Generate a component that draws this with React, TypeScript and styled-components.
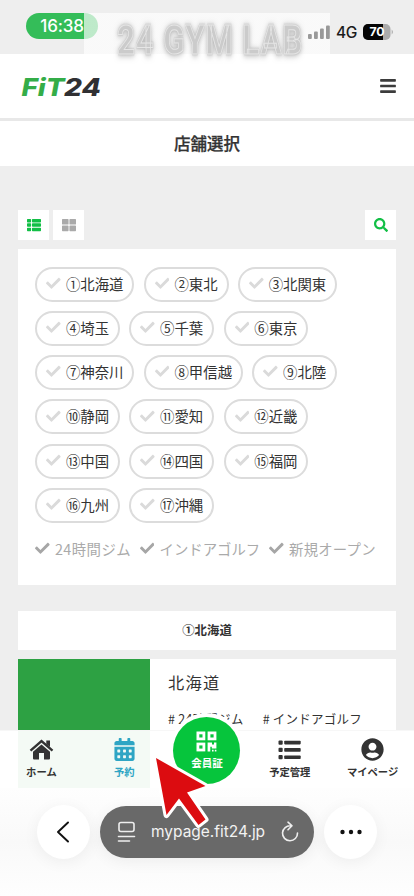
import React from "react";
import styled, { createGlobalStyle, css } from "styled-components";
import {
  FaBars,
  FaCalendarAlt,
  FaCheck,
  FaSearch,
  FaThLarge,
  FaThList,
  FaUserCircle,
} from "react-icons/fa";

const GlobalStyle = createGlobalStyle`
  * { box-sizing: border-box; }
  body {
    margin: 0;
    background: #eee;
    color: #333;
    font-family: "Noto Sans CJK JP", sans-serif;
  }
`;

const Screen = styled.div`
  position: relative;
  width: 414px;
  height: 896px;
  overflow: hidden;
  background: #eeeeee;
`;

const StatusBar = styled.div`
  height: 54px;
  display: flex;
  align-items: flex-start;
  justify-content: space-between;
  padding: 13px 20px 0 26px;
  font-family: Inter, sans-serif;
`;

const Clock = styled.div`
  width: 72px;
  height: 26px;
  border-radius: 13px;
  background: #34bd59;
  color: #fff;
  font-size: 17px;
  font-weight: 500;
  line-height: 26px;
  text-align: center;
  letter-spacing: -0.2px;
`;

const StatusRight = styled.div`
  position: relative;
  z-index: 1;
  display: flex;
  align-items: center;
  height: 38px;
  font-size: 15.5px;
  font-weight: 500;
  letter-spacing: -0.3px;
  color: #1c1c1c;
`;

const Network = styled.span`
  margin: 0 6px 0 6px;
  width: 21px;
`;

const Banner = styled.div`
  position: absolute;
  left: 84px;
  top: 13px;
  width: 246px;
  height: 50px;
  padding: 3px 0 0 33px;
  background: linear-gradient(rgba(255, 255, 255, 0.68) 0 84%, rgba(255, 255, 255, 0));
`;

const BannerTitle = styled.div`
  width: max-content;
  transform: scaleX(0.775);
  transform-origin: left;
  font: 700 40.5px/48px Roboto, sans-serif;
  letter-spacing: 1px;
  white-space: nowrap;
  color: #cbcbcb;
  -webkit-text-stroke: 1px #e6e6e6;
  filter: drop-shadow(0 0 1px #bbb) drop-shadow(0 1px 3px rgba(120, 120, 120, 0.5));
`;

const Header = styled.header`
  height: 67px;
  padding: 0 17px 0 21px;
  background: #fff;
  border-bottom: 3px solid #e8e8e8;
  display: flex;
  align-items: center;
  justify-content: space-between;
`;

const PageTitle = styled.h1`
  margin: 0;
  height: 45px;
  background: #fff;
  text-align: center;
  font-size: 16.5px;
  line-height: 44px;
  font-weight: 500;
  -webkit-text-stroke: 0.25px #333;
`;

const Content = styled.main`
  padding: 44px 18px 0;
`;

const Toolbar = styled.div`
  display: flex;
  gap: 4px;
  margin-bottom: 9px;
`;

const ToolButton = styled.button<{ $tone: string; $end?: boolean }>`
  width: 31px;
  height: 30px;
  padding: 0;
  border: 0;
  background: #fff;
  color: ${(p) => p.$tone};
  display: flex;
  align-items: center;
  justify-content: center;
  font-size: 14px;
  ${(p) => p.$end && css`margin-left: auto;`}
`;

const Panel = styled.section`
  height: 336px;
  padding: 18px 0 0 17.3px;
  background: #fff;
`;

const ChipRow = styled.div`
  display: flex;
  gap: 9.4px;
  height: 35px;
  margin-bottom: 9.15px;
`;

const Chip = styled.button`
  display: flex;
  align-items: center;
  gap: 5px;
  height: 35px;
  padding: 0 9px 2px 9px;
  border: 2px solid #dcdcdc;
  border-radius: 18px;
  background: #fff;
  color: #333;
  font: 400 14.4px/29px "Noto Sans CJK JP", sans-serif;
  white-space: nowrap;
  svg { font-size: 14.6px; color: #dadada; }
`;

const Legend = styled.div`
  display: flex;
  gap: 9px;
  margin-top: 14px;
`;

const LegendItem = styled.span`
  display: flex;
  align-items: center;
  gap: 5px;
  height: 24px;
  font-size: 14.4px;
  line-height: 24px;
  color: #aaa;
  white-space: nowrap;
  svg { font-size: 14.6px; color: #a6a6a6; }
`;

const LegendText = styled.span<{ $width: number; $spacing: number }>`
  width: ${(p) => p.$width}px;
  letter-spacing: ${(p) => p.$spacing}px;
`;

const SectionTitle = styled.h2`
  margin: 26px 0 9px;
  height: 39px;
  background: #fff;
  text-align: center;
  font-size: 12.4px;
  line-height: 39px;
  font-weight: 700;
`;

const StoreCard = styled.article`
  display: flex;
  height: 200px;
  background: #fff;
`;

const StoreImage = styled.div`
  width: 132px;
  background: #2da143;
`;

const StoreInfo = styled.div`
  padding: 11px 0 0 18px;
`;

const StoreName = styled.div`
  font-size: 16.2px;
  line-height: 25px;
  letter-spacing: 1.3px;
`;

const Tags = styled.div`
  display: flex;
  gap: 19px;
  margin-top: 14px;
  font-size: 12.5px;
  line-height: 20px;
  letter-spacing: 0.25px;
  white-space: nowrap;
`;

const Dock = styled.div`
  position: absolute;
  inset: 730px 0 0;
`;

const NavBar = styled.nav`
  height: 58px;
  display: grid;
  grid-template-columns: repeat(5, 82.8px);
  background: rgba(255, 255, 255, 0.95);
  border-top: 1px solid rgba(245, 245, 245, 0.8);
`;

const NavItem = styled.a<{ $active?: boolean }>`
  display: flex;
  flex-direction: column;
  align-items: center;
  padding-top: 7px;
  color: ${(p) => (p.$active ? "#2fa5c4" : "#333")};
  font-size: 10.3px;
  font-weight: 700;
  line-height: 18px;
  white-space: nowrap;
  svg { font-size: 23px; margin-bottom: 2px; }
`;

const MemberCard = styled.a`
  justify-self: center;
  width: 67px;
  height: 67px;
  margin-top: -14.5px;
  border-radius: 50%;
  background: #06c53c;
  box-shadow: 0 0 0 4px #fff;
  color: #fff;
  display: flex;
  flex-direction: column;
  align-items: center;
  padding-top: 14px;
  font-size: 10.5px;
  font-weight: 700;
  line-height: 16px;
  svg { margin-bottom: 3px; }
`;

const BrowserBar = styled.div`
  height: 108px;
  padding: 17px 37px 0;
  display: flex;
  align-items: flex-start;
  justify-content: space-between;
  background: linear-gradient(#fefefe, #f9f9f9 50%, #fefefe);
`;

const RoundButton = styled.button`
  width: 53px;
  height: 54px;
  padding: 0;
  border: 0;
  border-radius: 50%;
  background: #fff;
  box-shadow: 0 3px 16px rgba(0, 0, 0, 0.055);
  display: flex;
  align-items: center;
  justify-content: center;
`;

const AddressPill = styled.div`
  width: 214px;
  height: 52px;
  margin-top: 1px;
  padding: 0 14px 0 17px;
  border-radius: 26px;
  background: #696969;
  box-shadow: 0 3px 16px rgba(0, 0, 0, 0.06);
  display: flex;
  align-items: center;
  color: #f2f2f2;
  font: 400 15.5px/52px Inter, sans-serif;
`;

const Address = styled.span`
  width: 115px;
  margin: 0 15px 0 15px;
  letter-spacing: -0.02px;
  white-space: nowrap;
`;

const Pointer = styled.svg`
  position: absolute;
  left: 148px;
  top: 750px;
`;

const chipRows = [
  ["①北海道", "②東北", "③北関東"],
  ["④埼玉", "⑤千葉", "⑥東京"],
  ["⑦神奈川", "⑧甲信越", "⑨北陸"],
  ["⑩静岡", "⑪愛知", "⑫近畿"],
  ["⑬中国", "⑭四国", "⑮福岡"],
  ["⑯九州", "⑰沖縄"],
];

const legend = [
  { label: "24時間ジム", width: 76, spacing: 0.45 },
  { label: "インドアゴルフ", width: 101, spacing: 0 },
  { label: "新規オープン", width: 90, spacing: 0.2 },
];

const Signal = () => (
  <svg width="22" height="14" viewBox="0 0 22 14" fill="#999">
    <rect x="0" y="9" width="3.8" height="5" rx="1" />
    <rect x="6" y="6.5" width="3.8" height="7.5" rx="1" />
    <rect x="12" y="3.5" width="3.8" height="10.5" rx="1" />
    <rect x="18" y="0.5" width="3.8" height="13.5" rx="1" />
  </svg>
);

const Battery = () => (
  <svg width="31" height="16" viewBox="0 0 31 16">
    <rect width="27.5" height="16" rx="5" fill="#ababab" />
    <path d="M5 0H20V16H5A5 5 0 0 1 0 11V5A5 5 0 0 1 5 0Z" fill="#050505" />
    <path d="M28.7 5.5Q31.2 8 28.7 10.5Z" fill="#ababab" />
    <text x="13.8" y="12.4" textAnchor="middle" fontFamily="Inter" fontSize="12.3" fontWeight="700" fill="#fff">70</text>
  </svg>
);

const Logo = () => (
  <svg width="90" height="40" viewBox="0 0 90 40" fontFamily="Inter" fontWeight="800" fontStyle="italic" fontSize="24">
    <text x="0.5" y="29.5" textLength="43" lengthAdjust="spacingAndGlyphs" fill="#34ad48">FiT</text>
    <text x="43" y="29.5" textLength="37" lengthAdjust="spacingAndGlyphs" fill="#303033">24</text>
  </svg>
);

const HomeIcon = () => (
  <svg width="25" height="23" viewBox="0 0 25 23" fill="currentColor">
    <path d="M12.5 6.5 21 13.8V20.5A1 1 0 0 1 20 21.5H15V15H10V21.5H5A1 1 0 0 1 4 20.5V13.8Z" />
    <path d="M1.5 12.6 12.5 3 23.5 12.6" fill="none" stroke="currentColor" strokeWidth="2.4" />
    <path d="M17.3 2.5H21V9L17.3 6Z" />
  </svg>
);

const ListIcon = () => (
  <svg width="23" height="23" viewBox="0 0 23 23" fill="currentColor">
    {[2.5, 9.8, 17.1].map((y) => (
      <g key={y}>
        <rect x="0.5" y={y} width="4.2" height="4.2" rx="1" />
        <rect x="6.2" y={y + 0.3} width="16.5" height="3.6" rx="0.8" />
      </g>
    ))}
  </svg>
);

const QrIcon = () => (
  <svg width="21" height="21" viewBox="0 0 21 21">
    <g fill="none" stroke="#fff" strokeWidth="2.8">
      <rect x="1.9" y="1.9" width="6" height="6" />
      <rect x="13" y="1.9" width="6" height="6" />
      <rect x="1.9" y="13" width="6" height="6" />
    </g>
    <path d="M11.6 11.6H16V13.6H18V11.6H20.4V17.5H15.8V15.8H14.3V20.4H11.6ZM16 18.8H17.6V20.4H16ZM18.8 18.8H20.4V20.4H18.8Z" fill="#fff" />
  </svg>
);

export default function App() {
  return (
    <>
      <GlobalStyle />
      <Screen>
        <StatusBar>
          <Clock>16:38</Clock>
          <StatusRight>
            <Signal />
            <Network>4G</Network>
            <Battery />
          </StatusRight>
        </StatusBar>
        <Header>
          <Logo />
          <FaBars size={18} color="#3c3c3c" />
        </Header>
        <PageTitle>店舗選択</PageTitle>
        <Content>
          <Toolbar>
            <ToolButton $tone="#12bf46"><FaThList /></ToolButton>
            <ToolButton $tone="#aaa"><FaThLarge /></ToolButton>
            <ToolButton $tone="#12bf46" $end><FaSearch /></ToolButton>
          </Toolbar>
          <Panel>
            {chipRows.map((row) => (
              <ChipRow key={row[0]}>
                {row.map((label) => (
                  <Chip key={label}><FaCheck />{label}</Chip>
                ))}
              </ChipRow>
            ))}
            <Legend>
              {legend.map((item) => (
                <LegendItem key={item.label}>
                  <FaCheck />
                  <LegendText $width={item.width} $spacing={item.spacing}>{item.label}</LegendText>
                </LegendItem>
              ))}
            </Legend>
          </Panel>
          <SectionTitle>①北海道</SectionTitle>
          <StoreCard>
            <StoreImage />
            <StoreInfo>
              <StoreName>北海道</StoreName>
              <Tags><span># 24時間ジム</span><span># インドアゴルフ</span></Tags>
            </StoreInfo>
          </StoreCard>
        </Content>
        <Banner><BannerTitle>24 GYM LAB</BannerTitle></Banner>
        <Dock>
          <NavBar>
            <NavItem><HomeIcon />ホーム</NavItem>
            <NavItem $active><FaCalendarAlt />予約</NavItem>
            <MemberCard><QrIcon />会員証</MemberCard>
            <NavItem><ListIcon />予定管理</NavItem>
            <NavItem><FaUserCircle />マイページ</NavItem>
          </NavBar>
          <BrowserBar>
            <RoundButton>
              <svg width="14" height="22" viewBox="0 0 14 22" fill="none" stroke="#111" strokeWidth="1.9" strokeLinecap="round" strokeLinejoin="round"><path d="M11 1.5 1 11l10 9.5" /></svg>
            </RoundButton>
            <AddressPill>
              <svg width="19" height="22" viewBox="0 0 19 22" fill="none" stroke="#eee" strokeWidth="1.6" strokeLinecap="round"><rect x="2" y="1.5" width="15" height="9" rx="2" /><path d="M1.5 15.5h16M1.5 20h11" /></svg>
              <Address>mypage.fit24.jp</Address>
              <svg width="18" height="22" viewBox="0 0 18 22" fill="none" stroke="#eee" strokeWidth="1.6" strokeLinecap="round" strokeLinejoin="round"><path d="M9.8 4.8A7.5 7.5 0 1 0 16.5 12M7 1.2l4 3.6-4 4" /></svg>
            </AddressPill>
            <RoundButton>
              <svg width="22" height="6" viewBox="0 0 22 6" fill="#111"><circle cx="2.5" cy="3" r="2.2" /><circle cx="11" cy="3" r="2.2" /><circle cx="19.5" cy="3" r="2.2" /></svg>
            </RoundButton>
          </BrowserBar>
        </Dock>
        <Pointer width="66" height="84" viewBox="148 750 66 84">
          <path d="M156 758 205.5 786 187 792.5 205.5 819.5 198.5 825 179 798.5 166.5 815Z" fill="#dc0c10" stroke="#fff" strokeWidth="6" strokeLinejoin="round" paintOrder="stroke" />
        </Pointer>
      </Screen>
    </>
  );
}
